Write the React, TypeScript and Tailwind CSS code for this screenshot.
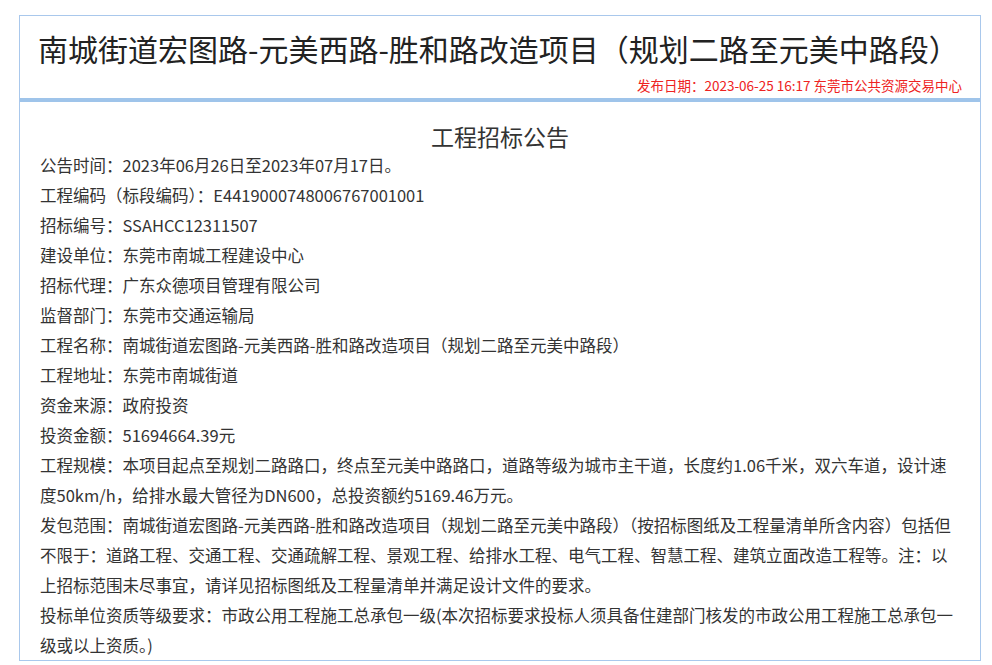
export default function App() {
  const rows: [string, string][] = [
    ["公告时间：", "2023年06月26日至2023年07月17日。"],
    ["工程编码（标段编码）：", "E4419000748006767001001"],
    ["招标编号：", "SSAHCC12311507"],
    ["建设单位：", "东莞市南城工程建设中心"],
    ["招标代理：", "广东众德项目管理有限公司"],
    ["监督部门：", "东莞市交通运输局"],
    ["工程名称：", "南城街道宏图路-元美西路-胜和路改造项目（规划二路至元美中路段）"],
    ["工程地址：", "东莞市南城街道"],
    ["资金来源：", "政府投资"],
    ["投资金额：", "51694664.39元"],
    ["工程规模：", "本项目起点至规划二路路口，终点至元美中路路口，道路等级为城市主干道，长度约1.06千米，双六车道，设计速度50km/h，给排水最大管径为DN600，总投资额约5169.46万元。"],
    ["发包范围：", "南城街道宏图路-元美西路-胜和路改造项目（规划二路至元美中路段）（按招标图纸及工程量清单所含内容）包括但不限于：道路工程、交通工程、交通疏解工程、景观工程、给排水工程、电气工程、智慧工程、建筑立面改造工程等。注：以上招标范围未尽事宜，请详见招标图纸及工程量清单并满足设计文件的要求。"],
    ["投标单位资质等级要求：", "市政公用工程施工总承包一级(本次招标要求投标人须具备住建部门核发的市政公用工程施工总承包一级或以上资质。)"],
  ];
  return (
    <div className="bg-white pt-[15px] px-[19px] h-[665px] overflow-hidden" style={{ fontFamily: '"Microsoft YaHei", "Noto Sans CJK SC", sans-serif' }}>
      <div className="border border-[#a9c8ec] w-[962px]">
        <div className="px-[18px] pt-[12px] pb-[4px]">
          <h1 className="text-[30px] leading-[40px] text-[#222]">南城街道宏图路-元美西路-胜和路改造项目（规划二路至元美中路段）</h1>
          <div className="text-right text-[13.5px] text-[#ee2222] mt-[8px] leading-[18px]">发布日期：2023-06-25 16:17 东莞市公共资源交易中心</div>
        </div>
        <div className="h-[4px] bg-[#9fc4ea]" />
        <div className="px-[20px] pt-[16px] text-[16.5px] leading-[30px] text-[#333]">
          <h2 className="text-center text-[23px] leading-[36px] text-[#333] mb-[-4px]">工程招标公告</h2>
          {rows.map(([k, v]) => (
            <p key={k}>{k}{v}</p>
          ))}
        </div>
      </div>
    </div>
  );
}
